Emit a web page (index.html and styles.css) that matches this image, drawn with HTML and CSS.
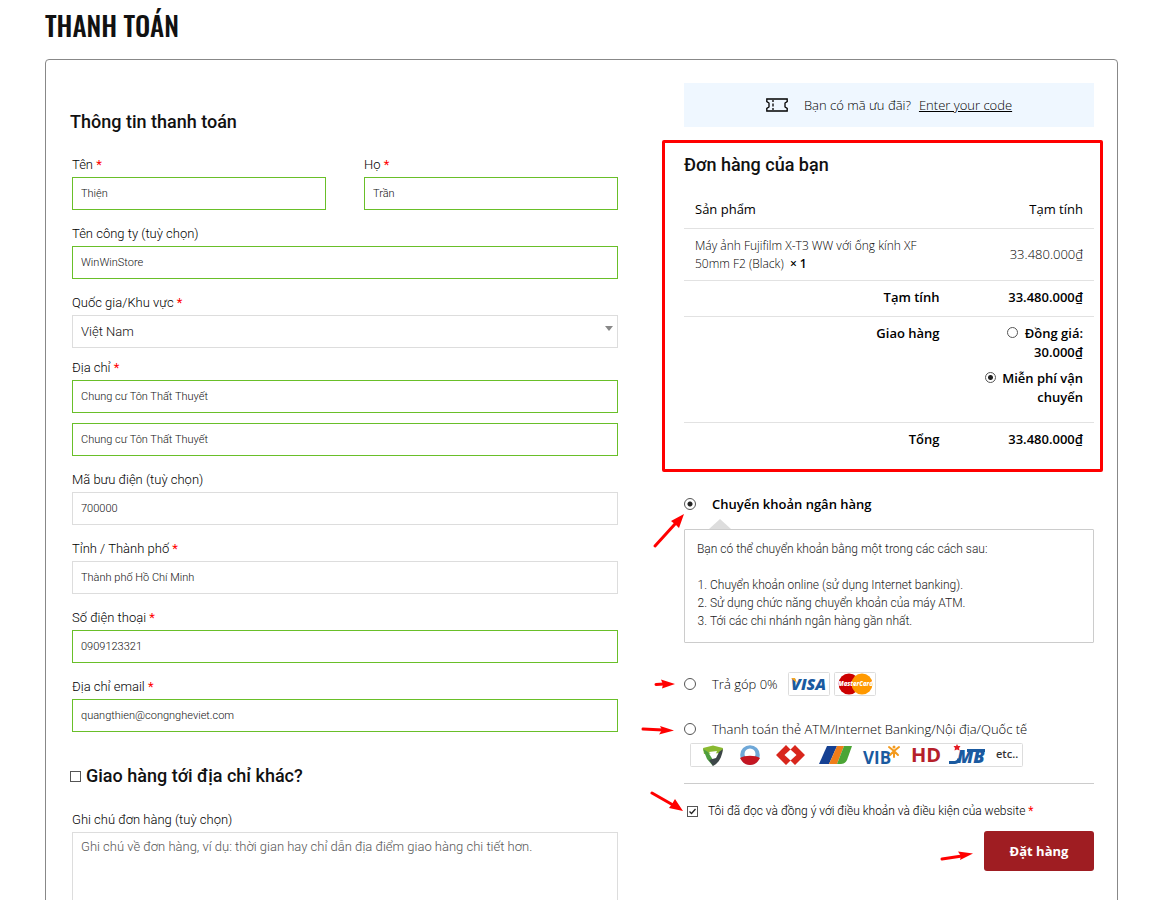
FILE: index.html
```html
<!doctype html>
<html lang="vi">
<head>
	<meta charset="UTF-8">
	<meta name="viewport" content="width=device-width, initial-scale=1">
	<title>Thanh toán</title>
	<link rel="stylesheet" href="styles.css">
</head>
<body>
	<h1 class="page-title">Thanh toán</h1>

	<form class="checkout" action="#" method="post">
		<div class="billing">
			<h2 class="title">Thông tin thanh toán</h2>
			<div class="fields">
				<div class="field-row">
					<div class="field valid">
						<label for="first_name">Tên <span class="required">*</span></label>
						<input type="text" id="first_name" value="Thiện">
					</div>
					<div class="field valid">
						<label for="last_name">Họ <span class="required">*</span></label>
						<input type="text" id="last_name" value="Trần">
					</div>
				</div>
				<div class="field valid">
					<label for="company">Tên công ty (tuỳ chọn)</label>
					<input type="text" id="company" value="WinWinStore">
				</div>
				<div class="field country">
					<label for="country">Quốc gia/Khu vực <span class="required">*</span></label>
					<div class="select-wrap">
						<select id="country">
							<option selected>Việt Nam</option>
						</select>
					</div>
				</div>
				<div class="field valid">
					<label for="address_1">Địa chỉ <span class="required">*</span></label>
					<input type="text" id="address_1" value="Chung cư Tôn Thất Thuyết">
					<input type="text" id="address_2" class="address-2" value="Chung cư Tôn Thất Thuyết" aria-label="Địa chỉ 2">
				</div>
				<div class="field">
					<label for="postcode">Mã bưu điện (tuỳ chọn)</label>
					<input type="text" id="postcode" value="700000">
				</div>
				<div class="field">
					<label for="city">Tỉnh / Thành phố <span class="required">*</span></label>
					<input type="text" id="city" value="Thành phố Hồ Chí Minh">
				</div>
				<div class="field valid">
					<label for="phone">Số điện thoại <span class="required">*</span></label>
					<input type="tel" id="phone" value="0909123321">
				</div>
				<div class="field valid">
					<label for="email">Địa chỉ email <span class="required">*</span></label>
					<input type="email" id="email" value="quangthien@congngheviet.com">
				</div>
			</div>

			<h2 class="title ship-title">
				<input type="checkbox" id="ship_other">
				<label for="ship_other">Giao hàng tới địa chỉ khác?</label>
			</h2>
			<div class="fields">
				<div class="field">
					<label for="note">Ghi chú đơn hàng (tuỳ chọn)</label>
					<textarea id="note" placeholder="Ghi chú về đơn hàng, ví dụ: thời gian hay chỉ dẫn địa điểm giao hàng chi tiết hơn."></textarea>
				</div>
			</div>
		</div>

		<div class="review">
			<div class="coupon">
				<svg class="ticket" width="22" height="14" viewBox="0 0 22 14" fill="none" stroke="#000" stroke-width="1.300">
					<path d="M.8 1h20.400v2.600l-2.200 1.400v4l2.200 1.400V13H.8v-2.600l2.200-1.400v-4L.8 3.600z"/>
					<path d="M7 2v2M7 5.500v3M7 10v2"/>
				</svg>
				<span>Bạn có mã ưu đãi?</span>
				<a href="#">Enter your code</a>
			</div>

			<div class="order">
				<h2 class="title">Đơn hàng của bạn</h2>
				<table class="order-table">
					<thead>
						<tr>
							<th class="product-name">Sản phẩm</th>
							<th>Tạm tính</th>
						</tr>
					</thead>
					<tbody>
						<tr>
							<td class="product-name">Máy ảnh Fujifilm X-T3 WW với ống kính XF 50mm F2 (Black)&nbsp; <b>× 1</b></td>
							<td>33.480.000₫</td>
						</tr>
					</tbody>
					<tfoot>
						<tr>
							<th>Tạm tính</th>
							<td>33.480.000₫</td>
						</tr>
						<tr class="shipping">
							<th>Giao hàng</th>
							<td>
								<ul>
									<li><input type="radio" name="shipping" id="ship_flat"> <label for="ship_flat">Đồng giá: 30.000₫</label></li>
									<li><input type="radio" name="shipping" id="ship_free" checked> <label for="ship_free">Miễn phí vận chuyển</label></li>
								</ul>
							</td>
						</tr>
						<tr>
							<th>Tổng</th>
							<td>33.480.000₫</td>
						</tr>
					</tfoot>
				</table>
			</div>

			<ul class="payments">
				<li class="payment">
					<input type="radio" name="payment" id="pay_bank" checked>
					<label for="pay_bank"><b>Chuyển khoản ngân hàng</b></label>
					<svg class="arrow arrow-bank" width="34" height="38" viewBox="0 0 34 38"><path d="M3 35L23 13" stroke="red" stroke-width="3" stroke-linecap="round"/><path d="M32 3L27 17L24 14L19 10z" fill="red"/></svg>
				</li>
				<li class="payment-box">
					<p>Bạn có thể chuyển khoản bằng một trong các cách sau:</p>
					<ol>
						<li>Chuyển khoản online (sử dụng Internet banking).</li>
						<li>Sử dụng chức năng chuyển khoản của máy ATM.</li>
						<li>Tới các chi nhánh ngân hàng gần nhất.</li>
					</ol>
				</li>
				<li class="payment installment">
					<input type="radio" name="payment" id="pay_card">
					<label for="pay_card">Trả góp 0%</label>
					<svg class="card" width="42" height="25" viewBox="0 0 42 25">
						<rect x=".5" y=".5" width="41" height="23" rx="1" fill="#fff" stroke="#ddd"/>
						<text x="3" y="18" font-size="16" class="visa">VISA</text>
						<path d="M3 6h4l2 5z" fill="#f4a622"/>
					</svg>
					<svg class="card" width="42" height="25" viewBox="0 0 42 25">
						<rect x=".5" y=".5" width="41" height="23" rx="1" fill="#fff" stroke="#ddd"/>
						<circle cx="15" cy="12" r="10.500" fill="#c00"/>
						<circle cx="28" cy="12" r="10.500" fill="#f90"/>
						<text x="21.500" y="14" font-size="6" class="master">MasterCard</text>
					</svg>
					<svg class="arrow arrow-card" width="22" height="12" viewBox="0 0 22 12"><path d="M2 6.500L10 6" stroke="red" stroke-width="3" stroke-linecap="round"/><path d="M21 6L7 1.500L9 6.500L8 10.500z" fill="red"/></svg>
				</li>
				<li class="payment atm">
					<input type="radio" name="payment" id="pay_atm">
					<label for="pay_atm">Thanh toán thẻ ATM/Internet Banking/Nội địa/Quốc tế</label>
					<svg class="arrow arrow-atm" width="34" height="12" viewBox="0 0 34 12"><path d="M2 5L22 6" stroke="red" stroke-width="3" stroke-linecap="round"/><path d="M33 6.500L19 2L21 6L18 10.500z" fill="red"/></svg>
				</li>
				<li class="banks">
					<svg width="333" height="25" viewBox="0 0 333 25">
						<rect x=".5" y=".5" width="332" height="23" rx="1" fill="#fff" stroke="#ddd"/>
						<!-- vpbank -->
						<path d="M13 5L23 2.500L33 5L32 10L14 11z" fill="#8aba31"/>
						<path d="M13 6L17 16L23 23L23 17L18 9z" fill="#4e9d3f"/>
						<path d="M33 6C32 14 29 20 23 23L19 17L26 15L29 9z" fill="#3d4648"/>
						<path d="M19 9L27 8L24 15z" fill="#fff"/>
						<!-- abbank -->
						<circle cx="60" cy="12" r="9.800" fill="#6fa8d8"/>
						<circle cx="60" cy="11" r="5.500" fill="#fff"/>
						<path d="M50 15C55 12 65 12 70 15C68 19 65 22 60 22S52 19 50 15z" fill="#c41622"/>
						<!-- techcombank -->
						<path d="M96 2L106 12L96 22L86 12z M105 2L115 12L105 22L95 12z" fill="#d8261c"/>
						<path d="M100.500 6.500L106.500 12L100.500 17.500L94.500 12z" fill="#fff"/>
						<!-- mdb -->
						<path d="M137 3h10l-8 18h-10z" fill="#164193"/>
						<path d="M147 3h7l-7 18h-8z" fill="#ef7d1a"/>
						<path d="M154 3h8l-5 14q-2 4-6 4h-4z" fill="#4ba535"/>
						<!-- vib -->
						<text x="173" y="21" font-size="17" class="vib">VIB</text>
						<path d="M204 8L199 4M204 8L209 4M204 8V14M204 8L200 12M204 8L208 12" stroke="#f39a1d" stroke-width="2" stroke-linecap="round"/>
						<circle cx="204" cy="4" r="1.500" fill="#f39a1d"/>
						<!-- hd -->
						<text x="221" y="19" font-size="20" class="hd">HD</text>
						<!-- mb -->
						<text x="267" y="20" font-size="18" class="mb">MB</text>
						<path d="M259 19.500h6q3 0 4-4M277 7.500h18" stroke="#1a5aa0" stroke-width="3" fill="none"/>
						<path d="M267 1l1 2h2.500l-1.500 2 .5 2.500-2.500-1-2.500 1 .5-2.500-1.500-2h2.500z" fill="#e41c24"/>
						<text x="306" y="15" font-size="11" class="etc">etc..</text>
					</svg>
				</li>
			</ul>

			<div class="terms">
				<input type="checkbox" id="terms" checked>
				<label for="terms">Tôi đã đọc và đồng ý với điều khoản và điều kiện của website <span class="required">*</span></label>
				<svg class="arrow arrow-terms" width="36" height="22" viewBox="0 0 36 22"><path d="M3 2L24 14" stroke="red" stroke-width="3" stroke-linecap="round"/><path d="M34 20L20 17L23 13L26 8z" fill="red"/></svg>
			</div>
			<div class="submit">
				<svg class="arrow-submit" width="34" height="12" viewBox="0 0 34 12"><path d="M2 9L22 6" stroke="red" stroke-width="3" stroke-linecap="round"/><path d="M33 3.500L18 1.500L21 6L20 10z" fill="red"/></svg>
				<button type="submit">Đặt hàng</button>
			</div>
		</div>
	</form>
</body>
</html>
```
FILE: styles.css
```css
*{
	box-sizing: border-box;
	margin: 0;
	padding: 0;
}

body{
	padding: 0 40px 40px 45px;
	background-color: #fff;
	color: #000;
	font: 300 13px/18px Roboto, sans-serif;
}

ul, ol{
	list-style: none;
}

.page-title{
	padding: 5px 0 14px;
	font: 500 27px/40px Oswald, "Liberation Sans Narrow", sans-serif;
	color: #111;
	text-transform: uppercase;
}

.checkout{
	display: grid;
	grid-template-columns: 55fr 41fr;
	column-gap: 64px;
	padding: 23px 23px 40px 24px;
	border: 1px solid #888;
	border-radius: 4px;
}

.title{
	font-size: 18px;
	font-weight: 500;
	line-height: 24px;
	color: #111;
}

.required{
	color: red;
	font-weight: 400;
}

/* billing */
.billing{
	padding-top: 27px;
}

.fields{
	padding: 19px 2px 0;
}

.field{
	margin-bottom: 12px;
}

.field label{
	display: block;
	line-height: 24px;
}

.field-row{
	display: grid;
	grid-template-columns: 1fr 1fr;
	gap: 38px;
}

.field input, .field select, .field textarea{
	display: block;
	width: 100%;
	height: 33px;
	padding: 0 8px;
	border: 1px solid #ddd;
	border-radius: 0;
	background-color: #fff;
	color: #111;
	font: 300 11px Roboto, sans-serif;
}

.field.valid input{
	border-color: #69bf29;
}

.field .address-2{
	margin-top: 10px;
}

.country{
	margin-bottom: 8px;
}

.select-wrap{
	position: relative;
}

.select-wrap:after{
	content: "";
	position: absolute;
	right: 5px;
	top: 11px;
	border: 4px solid transparent;
	border-top: 5px solid #888;
	border-bottom: 0;
}

.field select{
	appearance: none;
	font-size: 13px;
}

.field textarea{
	height: 120px;
	padding: 5px 8px;
	font-size: 13px;
	line-height: 18px;
	resize: none;
}

.field textarea::placeholder{
	color: #555;
}

.ship-title{
	display: flex;
	align-items: center;
	gap: 5px;
	padding-top: 20px;
}

.ship-title + .fields{
	padding-top: 20px;
}

/* radios and tick boxes */
[type="radio"], [type="checkbox"]{
	appearance: none;
	flex: none;
	width: 11px;
	height: 11px;
	border: 1px solid #555;
	background-color: #fff;
}

[type="radio"]{
	border-radius: 50%;
}

[type="radio"]:checked{
	background: radial-gradient(circle, #222 2px, #fff 3px);
}

[type="checkbox"]:checked{
	background: url("data:image/svg+xml,%3Csvg xmlns='http://www.w3.org/2000/svg' viewBox='0 0 9 9'%3E%3Cpath d='M1.500 4.500l2 2 4-4.500' fill='none' stroke='%23222' stroke-width='1.300'/%3E%3C/svg%3E");
}

/* order review */
.review{
	font-family: "Open Sans", sans-serif;
}

.coupon{
	display: flex;
	align-items: center;
	justify-content: center;
	height: 44px;
	background-color: #eff7ff;
}

.ticket{
	margin-right: 16px;
}

.coupon a{
	margin-left: 8px;
	color: #000;
}

.order{
	margin: 13px -9px 20px -22px;
	padding: 10px 6px 11px 19px;
	border: 3px solid red;
	border-radius: 2px;
}

.order .title{
	font-family: Roboto, sans-serif;
}

.order-table{
	width: 100%;
	margin-top: 14px;
	border-collapse: collapse;
}

.order-table th, .order-table td{
	width: 35%;
	padding: 7px 11px 10px;
	border-bottom: 1px solid #e2e2e2;
	text-align: right;
	vertical-align: top;
}

.order-table thead th{
	padding-top: 9px;
	font-weight: 400;
}

.order-table .product-name{
	width: 65%;
	text-align: left;
}

.order-table tbody td{
	padding-bottom: 8px;
	vertical-align: middle;
}

.order-table tbody .product-name{
	padding: 8px 28px 7px 11px;
	font-size: 12px;
}

.order-table tbody b, .order-table tfoot th, .order-table tfoot td, .payment b{
	font-weight: 600;
}

.order-table tfoot tr:last-child th, .order-table tfoot tr:last-child td{
	border-bottom: 0;
}

.order-table .shipping td{
	padding-bottom: 8px;
}

.shipping li{
	margin-bottom: 7px;
	line-height: 19px;
}

.shipping input{
	margin-right: 3px;
}

/* payment methods */
.payment{
	position: relative;
	display: flex;
	align-items: center;
	height: 24px;
}

.payment label{
	margin-left: 16px;
}

.payment [type="radio"]{
	width: 12px;
	height: 12px;
}

.payment-box{
	position: relative;
	margin: 13px 0 29px;
	padding: 10px 12px 12px;
	border: 1px solid #ccc;
	border-radius: 1px;
	color: #222;
	font: 300 12px/18px Roboto, sans-serif;
}

.payment-box:before{
	content: "";
	position: absolute;
	left: 24px;
	top: -11px;
	border: 11px solid transparent;
	border-top: 0;
	border-bottom: 10px solid #ddd;
}

.payment-box p{
	margin-bottom: 18px;
}

.payment-box ol{
	padding-left: 13px;
	list-style: decimal;
}

.card{
	margin-left: 10px;
}

.card + .card{
	margin-left: 4px;
}

.atm{
	margin-top: 21px;
}

.banks{
	padding: 2px 0 15px 6px;
	border-bottom: 1px solid #ccc;
}

.banks svg{
	display: block;
	overflow: visible;
}

.visa, .master, .mb{
	font-family: "Open Sans", sans-serif;
	font-weight: 800;
	font-style: italic;
}

.visa, .mb, .vib{
	fill: #1a5aa0;
}

.master{
	fill: #fff;
	text-anchor: middle;
}

.vib, .hd{
	font-family: "Open Sans", sans-serif;
	font-weight: 700;
}

.hd{
	fill: #b5202a;
}

.etc{
	font-family: "Open Sans", sans-serif;
	font-weight: 600;
	fill: #333;
}

.terms{
	position: relative;
	display: flex;
	align-items: center;
	gap: 10px;
	padding: 18px 3px 11px;
	font: 300 12px/18px Roboto, sans-serif;
}

.submit{
	display: flex;
	align-items: center;
	justify-content: flex-end;
	gap: 10px;
}

.arrow-submit{
	margin-top: 10px;
}

.submit button{
	width: 110px;
	height: 40px;
	border: 0;
	border-radius: 3px;
	background-color: #9f1d22;
	color: #fff;
	font: bold 13px "Open Sans", sans-serif;
}

/* arrows that point at each step */
.arrow{
	position: absolute;
}

.arrow-bank{
	left: -32px;
	top: 19px;
}

.arrow-card{
	left: -30px;
	top: 6px;
}

.arrow-atm{
	left: -43px;
	top: 7px;
}

.arrow-terms{
	left: -35px;
	top: 7px;
}
```
